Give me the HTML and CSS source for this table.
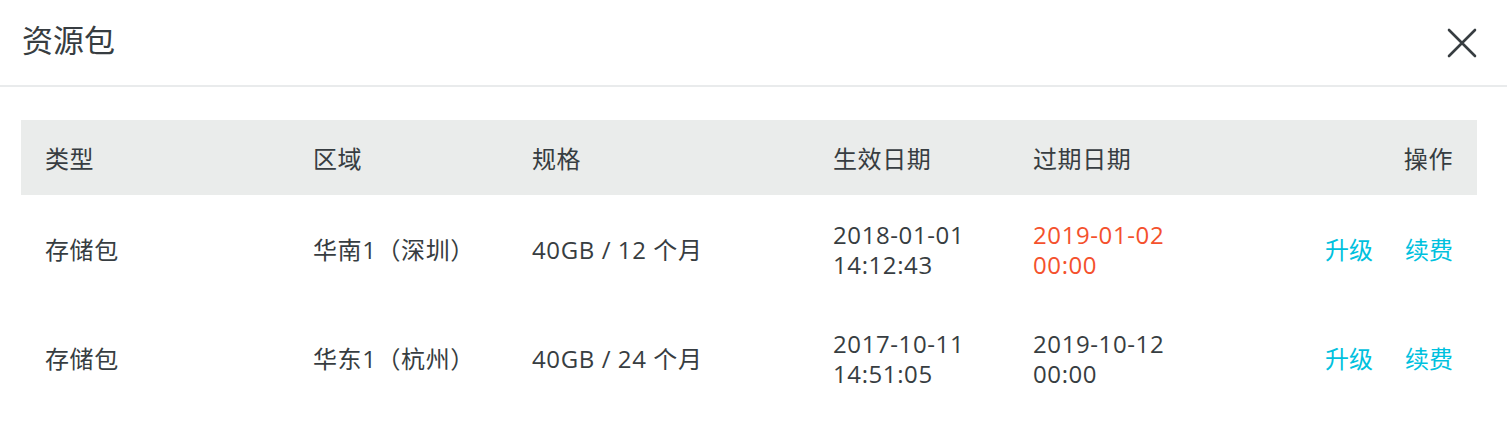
FILE: index.html
```html
<!DOCTYPE html>
<html lang="zh-CN">
<head>
<meta charset="utf-8">
<link rel="stylesheet" href="styles.css">
</head>
<body>
<div class="dialog">
  <header class="dialog-head">
    <h1 class="dialog-title">资源包</h1>
    <button class="close" aria-label="关闭">
      <svg width="30" height="30" viewBox="0 0 30 30"><path d="M2 2 L28 28 M28 2 L2 28" stroke="#373d41" stroke-width="2.6" stroke-linecap="round" fill="none"/></svg>
    </button>
  </header>
  <div class="dialog-body">
    <table class="tbl">
      <colgroup>
        <col class="c1"><col class="c2"><col class="c3"><col class="c4"><col class="c5"><col class="c6">
      </colgroup>
      <thead>
        <tr><th>类型</th><th>区域</th><th>规格</th><th>生效日期</th><th>过期日期</th><th class="right">操作</th></tr>
      </thead>
      <tbody>
        <tr>
          <td>存储包</td><td>华南1（深圳）</td><td>40GB / 12 个月</td>
          <td>2018-01-01<br>14:12:43</td>
          <td class="expired">2019-01-02<br>00:00</td>
          <td class="right"><div class="actions"><a>升级</a><a>续费</a></div></td>
        </tr>
        <tr>
          <td>存储包</td><td>华东1（杭州）</td><td>40GB / 24 个月</td>
          <td>2017-10-11<br>14:51:05</td>
          <td>2019-10-12<br>00:00</td>
          <td class="right"><div class="actions"><a>升级</a><a>续费</a></div></td>
        </tr>
      </tbody>
    </table>
  </div>
</div>
</body>
</html>
```
FILE: styles.css
```css
* { box-sizing: border-box; }
html, body { margin: 0; padding: 0; background: #fff; }
body {
  font-family: "Open Sans", "Noto Sans CJK SC", sans-serif;
  color: #373d41;
}
.dialog { width: 1507px; }
.dialog-head {
  height: 87px;
  border-bottom: 2px solid #e9ebec;
  display: flex;
  align-items: center;
  justify-content: space-between;
  padding: 0 30px 0 22px;
}
.dialog-title {
  margin: 0;
  font-size: 31px;
  font-weight: 400;
  color: #373d41;
  line-height: 1;
  padding-bottom: 4px;
}
.close {
  border: 0;
  background: none;
  padding: 0;
  width: 30px;
  height: 30px;
  display: flex;
}
.dialog-body { padding: 33px 30px 0 21px; }
.tbl {
  width: 1456px;
  border-collapse: collapse;
  table-layout: fixed;
  font-size: 24px;
  letter-spacing: 0.6px;
}
.c1 { width: 268px; }
.c2 { width: 219px; }
.c3 { width: 301px; }
.c4 { width: 200px; }
.c5 { width: 200px; }
.c6 { width: 268px; }
.tbl th {
  background: #eaeceb;
  font-weight: 400;
  text-align: left;
  height: 75px;
  padding: 0 24px;
  color: #373d41;
}
.tbl td {
  height: 109px;
  padding: 0 24px;
  line-height: 30px;
  vertical-align: middle;
}
.right { text-align: right !important; }
.expired { color: #f4512d; }
.actions { display: flex; justify-content: flex-end; gap: 32px; letter-spacing: 0; }
.actions a { color: #00c1de; cursor: pointer; }
```
